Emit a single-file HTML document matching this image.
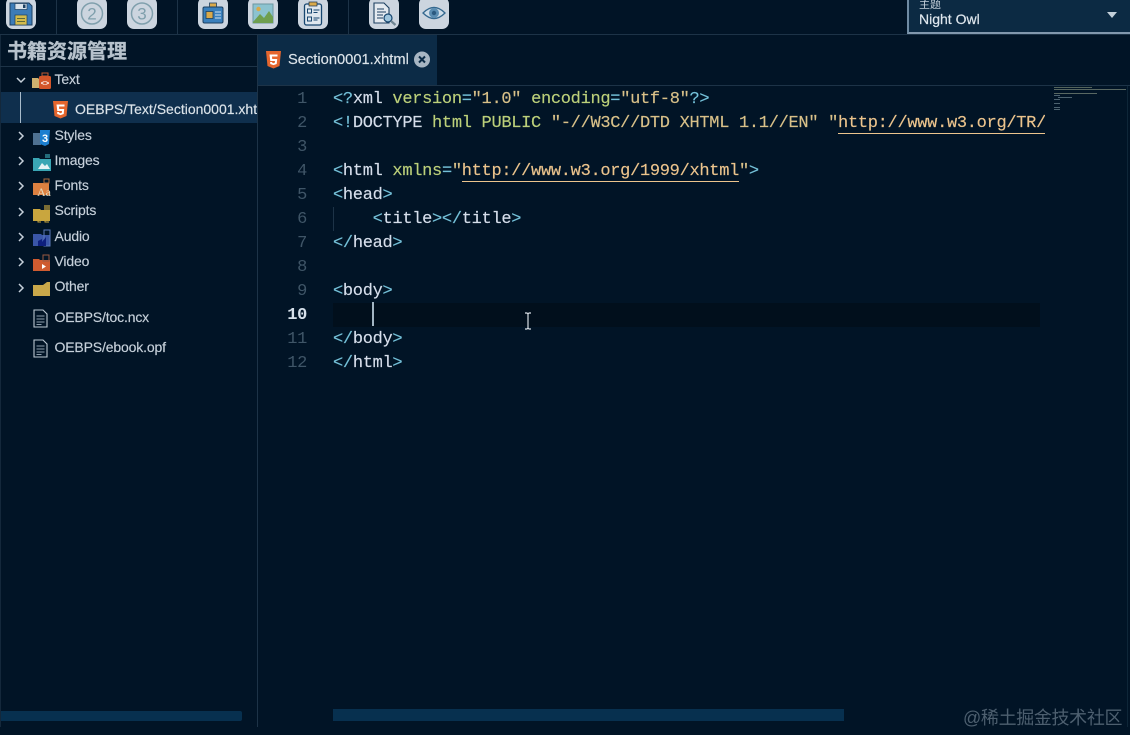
<!DOCTYPE html>
<html lang="zh"><head><meta charset="utf-8"><title>Editor</title>
<style>
*{box-sizing:border-box}
html,body{margin:0;padding:0}
body{width:1130px;height:735px;overflow:hidden;background:#011426;position:relative;font-family:"Liberation Sans","Noto Sans CJK SC",sans-serif}
.a{position:absolute}
.btn{position:absolute;top:-3px;width:30px;height:32px;background:#ccd5df;border-radius:7px}
.btn svg{position:absolute;left:0;top:0}
.sep{position:absolute;top:0;width:1px;height:34px;background:#1d3347}
.t{position:absolute;font-size:14px;color:#c6d0da;line-height:18px;white-space:nowrap;letter-spacing:-.15px;-webkit-text-stroke:.15px #c6d0da}
.chev{position:absolute;left:16px}
.ic{position:absolute;left:33px;overflow:visible}
.ln{position:absolute;width:28px;left:279px;text-align:right;font:17px/24px "Liberation Mono",monospace;letter-spacing:-.3px;color:#3f5567}
.c{position:absolute;left:333px;font:17px/24px "Liberation Mono",monospace;letter-spacing:-.3px;color:#d6deeb;white-space:pre;-webkit-text-stroke:.15px currentColor}
.p{color:#74c0d8}.g{color:#bcd07a}.y{color:#d9c189}.b{color:#82aaff}
.u{color:#ecc48d;border-bottom:1px solid #ecc48d}
</style></head><body>

<!-- toolbar -->
<div class="a" style="left:0;top:34px;width:1130px;height:1px;background:#1d3347"></div>
<div class="sep" style="left:56px"></div><div class="sep" style="left:177px"></div><div class="sep" style="left:348px"></div>

<div class="btn" style="left:6px"><svg width="30" height="32" viewBox="0 0 30 32"><path d="M4 6h19l3 3v19H4z" fill="#3d7cb8" stroke="#1c3f60" stroke-width="1"/><rect x="9" y="6.500" width="12" height="6" fill="#d9e2ea" stroke="#1c3f60" stroke-width=".7"/><rect x="17" y="7.500" width="2.500" height="3.500" fill="#1c3f60"/><rect x="9" y="18" width="12" height="10" fill="#d4bc4d" stroke="#1c3f60" stroke-width=".7"/><path d="M11 21.500h8M11 24.500h8" stroke="#5f6a3a"/></svg></div>

<div class="btn" style="left:77px"><svg width="30" height="32" viewBox="0 0 30 32"><circle cx="15" cy="16.500" r="10.500" fill="none" stroke="#7f9fac" stroke-width="1.500"/><text x="15" y="22.500" text-anchor="middle" font-family="Liberation Sans" font-size="17" fill="#7f9fac">2</text></svg></div>
<div class="btn" style="left:127px"><svg width="30" height="32" viewBox="0 0 30 32"><circle cx="15" cy="16.500" r="10.500" fill="none" stroke="#7f9fac" stroke-width="1.500"/><text x="15" y="22.500" text-anchor="middle" font-family="Liberation Sans" font-size="17" fill="#7f9fac">3</text></svg></div>

<div class="btn" style="left:198px"><svg width="30" height="32" viewBox="0 0 30 32"><rect x="11.500" y="6" width="7" height="5" fill="#d9a94a" stroke="#1c3f60" stroke-width=".8"/><rect x="5" y="10" width="20" height="16" rx="1.500" fill="#3a80bd" stroke="#1c3f60"/><rect x="8" y="14.500" width="7" height="7" fill="#d9a94a" stroke="#1c3f60" stroke-width=".8"/><path d="M17 15h6M17 18h6M17 21h6" stroke="#cfe0ee"/></svg></div>
<div class="btn" style="left:248px"><svg width="30" height="32" viewBox="0 0 30 32"><rect x="5" y="7" width="20" height="19" fill="#8cc3d0" stroke="#6b97a2"/><circle cx="10.500" cy="12" r="2.200" fill="#d9a94a"/><path d="M5 25l7-8 4 4 5-7 4 6v6H5z" fill="#6f9f4f"/></svg></div>
<div class="btn" style="left:298px"><svg width="30" height="32" viewBox="0 0 30 32"><rect x="6.500" y="7" width="17" height="21" rx="2" fill="#dfe7ee" stroke="#17466f" stroke-width="1.300"/><rect x="11" y="5" width="8" height="4" fill="#d9a94a" stroke="#17314d" stroke-width=".7"/><rect x="9.500" y="12" width="4" height="4" fill="none" stroke="#17466f"/><rect x="9.500" y="20" width="4" height="4" fill="none" stroke="#17466f"/><path d="M15.500 13h6M15.500 15.500h4M15.500 21h6M15.500 23h4" stroke="#17466f"/></svg></div>

<div class="btn" style="left:369px"><svg width="30" height="32" viewBox="0 0 30 32"><path d="M5 6h10l5 5v15H5z" fill="#e4eaf0" stroke="#1c3f60" stroke-width="1.100"/><path d="M8 12h7M8 15h9M8 18h6M8 21h6" stroke="#1c3f60"/><circle cx="19" cy="21" r="4" fill="#9fc6de" stroke="#17466f" stroke-width="1.200"/><path d="M22 24l4.500 4" stroke="#6f8592" stroke-width="2.200"/></svg></div>
<div class="btn" style="left:419px"><svg width="30" height="32" viewBox="0 0 30 32"><path d="M4 16q11-11 22 0q-11 11-22 0z" fill="#cfdde8" stroke="#34688f" stroke-width="1.300"/><circle cx="15" cy="16" r="5" fill="#5a8db2"/><circle cx="15" cy="16" r="2.200" fill="#2b5a80"/></svg></div>

<!-- theme select -->
<div class="a" style="left:907px;top:-2px;width:223px;height:36px;background:#0c2a43;border-left:2px solid #6f8ba3;border-bottom:2px solid #8298ad"></div>
<div class="a" style="left:919px;top:-2px;font-size:11px;line-height:14px;color:#c3ced8">主题</div>
<div class="a" style="left:919px;top:11px;font-size:14px;line-height:16px;color:#dfe7ee;-webkit-text-stroke:.2px #dfe7ee">Night Owl</div>
<div class="a" style="left:1107px;top:12px;width:0;height:0;border-left:5px solid transparent;border-right:5px solid transparent;border-top:6px solid #c4d0da"></div>

<!-- sidebar -->
<div class="a" style="left:257px;top:35px;width:1px;height:692px;background:#1d3347"></div>
<div class="a" style="left:0;top:35px;width:1px;height:692px;background:#14283b"></div>
<div class="a" style="left:7px;top:40px;font-size:20px;line-height:25px;font-weight:700;color:#b7c2cc;-webkit-text-stroke:.3px #b7c2cc">书籍资源管理</div>
<div class="a" style="left:0;top:66px;width:258px;height:1px;background:#1d3347"></div>

<div class="a" style="left:1px;top:92px;width:256px;height:31px;background:#0f2f4d"></div>
<div class="a" style="left:20px;top:92px;width:1px;height:31px;background:#a9bccb"></div>

<svg class="chev" style="top:75px" width="10" height="10"><path d="M1 3l4 4 4-4" fill="none" stroke="#c6d0da" stroke-width="1.500"/></svg>
<svg class="ic" style="top:72px" width="18" height="17"><path d="M-1 6h6l1 1v9H-1z" fill="#cdb06f"/><path d="M9 1h6v3H9z" fill="none" stroke="#c25a30"/><rect x="6" y="4" width="12" height="13" rx="1.500" fill="#d4562a"/><text x="12" y="13.500" text-anchor="middle" font-family="Liberation Mono" font-size="7" font-weight="700" fill="#fff">&lt;&gt;</text></svg>
<div class="t" style="left:54.500px;top:70px">Text</div>

<svg style="position:absolute;left:53px;top:101px" width="16" height="18"><path d="M0 0h15l-1.500 15L7.500 17.500 1.500 15z" fill="#e5662e"/><path d="M3.500 3.500h8v2H6l.2 2.500h5l-.5 5-3.200 1.100-3.200-1.100-.2-2h2l.1 .8 1.300 .4 1.300-.4.200-1.800H4.300z" fill="#fff"/></svg>
<div class="a" style="left:75px;top:100px;width:182px;overflow:hidden;font-size:14px;line-height:18px;color:#dce4ea;white-space:nowrap;-webkit-text-stroke:.15px #dce4ea">OEBPS/Text/Section0001.xhtml</div>

<svg class="chev" style="top:131px" width="10" height="10"><path d="M3 1l4 4-4 4" fill="none" stroke="#c6d0da" stroke-width="1.500"/></svg>
<svg class="ic" style="top:129px" width="18" height="17"><path d="M0 4h8v12H0z" fill="#4f7191"/><path d="M7 1h10l-1 14-4 2-5-2z" fill="#1c7fd0"/><text x="12" y="13" text-anchor="middle" font-family="Liberation Sans" font-size="11" font-weight="700" fill="#fff">3</text></svg>
<div class="t" style="left:54.500px;top:126px">Styles</div>

<svg class="chev" style="top:156px" width="10" height="10"><path d="M3 1l4 4-4 4" fill="none" stroke="#c6d0da" stroke-width="1.500"/></svg>
<svg class="ic" style="top:154px" width="18" height="17"><path d="M0 4h6l1 1h11v12H0z" fill="#3aa6b4"/><path d="M12 0h5v4h-5z" fill="#3aa6b4" opacity=".6"/><path d="M5 15l4-6 3 3 2-2 3 5z" fill="#e6f2f4"/></svg>
<div class="t" style="left:54.500px;top:151px">Images</div>

<svg class="chev" style="top:181px" width="10" height="10"><path d="M3 1l4 4-4 4" fill="none" stroke="#c6d0da" stroke-width="1.500"/></svg>
<svg class="ic" style="top:179px" width="18" height="17"><path d="M0 4h16v12H0z" fill="#dc8040"/><path d="M11 0h5v4h-5z" fill="none" stroke="#b06a3a"/><text x="4" y="17" font-family="Liberation Serif" font-size="12" fill="#e6d9bc">Aa</text></svg>
<div class="t" style="left:54.500px;top:176px">Fonts</div>

<svg class="chev" style="top:207px" width="10" height="10"><path d="M3 1l4 4-4 4" fill="none" stroke="#c6d0da" stroke-width="1.500"/></svg>
<svg class="ic" style="top:205px" width="18" height="17"><path d="M0 4h7l1 1h9v11H0z" fill="#c9a63e"/><path d="M11 0h6v5h-6z" fill="#c9a63e" opacity=".6"/><path d="M5 15v2h3M12 15v2h4" stroke="#c9a63e" fill="none"/></svg>
<div class="t" style="left:54.500px;top:201px">Scripts</div>

<svg class="chev" style="top:232px" width="10" height="10"><path d="M3 1l4 4-4 4" fill="none" stroke="#c6d0da" stroke-width="1.500"/></svg>
<svg class="ic" style="top:230px" width="18" height="17"><path d="M0 4h8l1 1h8v11H0z" fill="#3a56a8"/><path d="M11 0h6v16h-6z" fill="none" stroke="#5c78b8"/><path d="M5 16v-5l4-2v3l4-5v9z" fill="#0e1f7c"/></svg>
<div class="t" style="left:54.500px;top:227px">Audio</div>

<svg class="chev" style="top:257px" width="10" height="10"><path d="M3 1l4 4-4 4" fill="none" stroke="#c6d0da" stroke-width="1.500"/></svg>
<svg class="ic" style="top:255px" width="18" height="17"><path d="M0 4h6l1 1h10v11H0z" fill="#cf5b30"/><path d="M10 0h6v6h-6z" fill="none" stroke="#9a5a42"/><path d="M9 9l4 2.500L9 14z" fill="#fff"/></svg>
<div class="t" style="left:54.500px;top:252px">Video</div>

<svg class="chev" style="top:283px" width="10" height="10"><path d="M3 1l4 4-4 4" fill="none" stroke="#c6d0da" stroke-width="1.500"/></svg>
<svg class="ic" style="top:281px" width="18" height="15"><path d="M0 4h10l4-3h3v14H0z" fill="#c9a84a"/></svg>
<div class="t" style="left:54.500px;top:277px">Other</div>

<svg class="ic" style="top:309px" width="15" height="19"><path d="M1 1h9l4 4v13H1z" fill="none" stroke="#bcc8d2" stroke-width="1.100"/><path d="M3.500 7h8M3.500 10h8M3.500 13h8M3.500 15.500h5" stroke="#8fa0ae"/></svg>
<div class="t" style="left:54.500px;top:308px">OEBPS/toc.ncx</div>
<svg class="ic" style="top:339px" width="15" height="19"><path d="M1 1h9l4 4v13H1z" fill="none" stroke="#bcc8d2" stroke-width="1.100"/><path d="M3.500 7h8M3.500 10h8M3.500 13h8M3.500 15.500h5" stroke="#8fa0ae"/></svg>
<div class="t" style="left:54.500px;top:338px">OEBPS/ebook.opf</div>

<div class="a" style="left:1px;top:711px;width:241px;height:10px;background:#07304f;border-radius:0 2px 2px 0"></div>

<!-- tabs -->
<div class="a" style="left:258px;top:35px;width:179px;height:50px;background:#0c2b46"></div>
<div class="a" style="left:258px;top:85px;width:872px;height:1px;background:#1d3347"></div>
<svg style="position:absolute;left:266px;top:51px" width="16" height="18"><path d="M0 0h15l-1.500 15L7.500 17.500 1.500 15z" fill="#e5662e"/><path d="M3.500 3.500h8v2H6l.2 2.500h5l-.5 5-3.200 1.100-3.200-1.100-.2-2h2l.1 .8 1.300 .4 1.300-.4.200-1.800H4.300z" fill="#fff"/></svg>
<div class="a" style="left:288px;top:51px;font-size:14.700px;line-height:18px;color:#dce4ea;white-space:nowrap;-webkit-text-stroke:.15px #dce4ea">Section0001.xhtml</div>
<svg style="position:absolute;left:414px;top:51px" width="16" height="17"><circle cx="8" cy="8.500" r="8" fill="#a8b6c3"/><path d="M5 5.500l6 6M11 5.500l-6 6" stroke="#0c2b46" stroke-width="2"/></svg>

<!-- editor -->
<div class="a" style="left:333px;top:303px;width:707px;height:24px;background:#010f1c"></div>
<div class="a" style="left:333px;top:207px;width:1px;height:24px;background:#1d3347"></div>
<div class="a" style="left:372px;top:302px;width:2px;height:24px;background:#a3b5c3"></div>
<div class="a" style="left:1127px;top:86px;width:1px;height:641px;background:#0e2638"></div>

<div class="ln" style="top:88px">1</div>
<div class="ln" style="top:112px">2</div>
<div class="ln" style="top:136px">3</div>
<div class="ln" style="top:160px">4</div>
<div class="ln" style="top:184px">5</div>
<div class="ln" style="top:208px">6</div>
<div class="ln" style="top:232px">7</div>
<div class="ln" style="top:256px">8</div>
<div class="ln" style="top:280px">9</div>
<div class="ln" style="top:304px;color:#d6e0ea;font-weight:700">10</div>
<div class="ln" style="top:328px">11</div>
<div class="ln" style="top:352px">12</div>

<div class="c" style="top:88px"><span class="p">&lt;?</span>xml <span class="g">version</span><span class="p">=</span><span class="y">"1.0"</span> <span class="g">encoding</span><span class="p">=</span><span class="y">"utf-8"</span><span class="p">?&gt;</span></div>
<div class="a" style="left:333px;top:112px;width:712px;height:24px;overflow:hidden"><div class="c" style="left:0;top:0"><span class="p">&lt;!</span>DOCTYPE <span class="g">html</span> <span class="g">PUBLIC</span> <span class="y">"-//W3C//DTD XHTML 1.1//EN"</span> <span class="y">"</span><span class="u">http://www.w3.org/TR/xhtml11/DTD/xhtml11.dtd</span></div></div>
<div class="c" style="top:160px"><span class="p">&lt;</span>html <span class="g">xmlns</span><span class="p">=</span><span class="y">"</span><span class="u">http://www.w3.org/1999/xhtml</span><span class="y">"</span><span class="p">&gt;</span></div>
<div class="c" style="top:184px"><span class="p">&lt;</span>head<span class="p">&gt;</span></div>
<div class="c" style="top:208px">    <span class="p">&lt;</span>title<span class="p">&gt;&lt;/</span>title<span class="p">&gt;</span></div>
<div class="c" style="top:232px"><span class="p">&lt;/</span>head<span class="p">&gt;</span></div>
<div class="c" style="top:280px"><span class="p">&lt;</span>body<span class="p">&gt;</span></div>
<div class="c" style="top:328px"><span class="p">&lt;/</span>body<span class="p">&gt;</span></div>
<div class="c" style="top:352px"><span class="p">&lt;/</span>html<span class="p">&gt;</span></div>

<!-- I-beam cursor -->
<svg style="position:absolute;left:523px;top:312px" width="10" height="18"><path d="M2 1h2l1 1 1-1h2M5 2v14M2 17h2l1-1 1 1h2" fill="none" stroke="#d8dee4" stroke-width="1.200"/></svg>

<!-- minimap -->
<svg style="position:absolute;left:1054px;top:86px" width="73" height="26">
<path d="M0 1.500h38" stroke="#8a9a80" stroke-width="1" opacity=".6"/>
<path d="M0 3.500h72" stroke="#94a08a" stroke-width="1" opacity=".6"/>
<path d="M0 7.500h43" stroke="#94a08a" stroke-width="1" opacity=".6"/>
<path d="M0 9.500h6M4 11.500h14M0 13.500h6M0 17.500h6M0 21.500h6M0 23.500h6" stroke="#7f97a0" stroke-width="1" opacity=".6"/>
</svg>

<!-- horizontal scrollbar -->
<div class="a" style="left:333px;top:709px;width:511px;height:12px;background:#07304f"></div>

<!-- watermark -->
<div class="a" style="left:963px;top:707px;font-size:18px;line-height:22px;letter-spacing:-.35px;color:#4d5f6f;white-space:nowrap">@稀土掘金技术社区</div>
</body></html>
